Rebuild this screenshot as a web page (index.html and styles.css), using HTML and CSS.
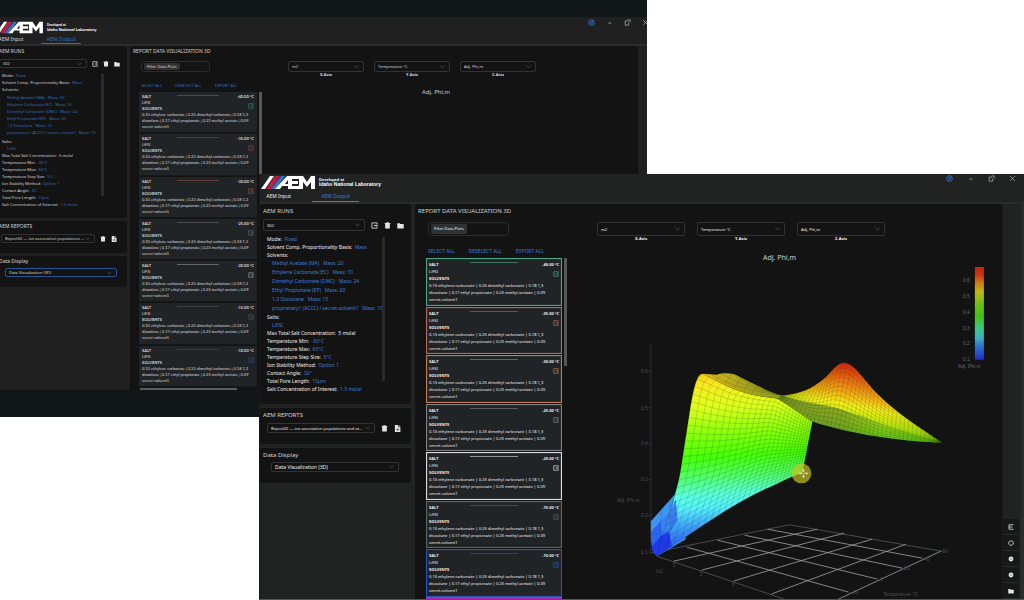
FILE: index.html
```html
<!DOCTYPE html>
<html lang="en">
<head>
<meta charset="utf-8">
<title>AEM Output</title>
<link rel="stylesheet" href="styles.css">
</head>
<body>
<main class="stage">
  <section class="window back" aria-label="AEM, data loading">
    <div class="app" data-app="back"></div>
  </section>
  <section class="window front" aria-label="AEM, 3D plot">
    <div class="app" data-app="front"></div>
  </section>
</main>

<template id="plot">
<svg class="plot" viewBox="568 264 434 336" role="img" aria-label="3D surface of Adj. Phi,m">
  <defs>
    <linearGradient id="face" gradientUnits="userSpaceOnUse" x1="690" y1="372" x2="700" y2="560">
      <stop offset="0" stop-color="#f4c41c"/><stop offset=".08" stop-color="#f8ec20"/><stop offset=".2" stop-color="#dcff1e"/>
      <stop offset=".33" stop-color="#8cff0c"/><stop offset=".46" stop-color="#46ff08"/><stop offset=".56" stop-color="#50ff64"/>
      <stop offset=".66" stop-color="#5cffe0"/><stop offset=".73" stop-color="#54f0ff"/><stop offset=".84" stop-color="#3c94f8"/><stop offset="1" stop-color="#2030f0"/>
    </linearGradient>
    <linearGradient id="ridge" gradientUnits="userSpaceOnUse" x1="850" y1="363" x2="836" y2="436">
      <stop offset="0" stop-color="#cc2010"/><stop offset=".2" stop-color="#e86010"/><stop offset=".4" stop-color="#f4a814"/>
      <stop offset=".56" stop-color="#f4ec1a"/><stop offset=".74" stop-color="#bcec10"/><stop offset=".9" stop-color="#70d014"/><stop offset="1" stop-color="#5cc012"/>
    </linearGradient>
    <linearGradient id="fold" x1="0" y1="0" x2="1" y2="0">
      <stop offset="0" stop-color="#e0bc1a"/><stop offset=".35" stop-color="#b8a81c"/><stop offset="1" stop-color="#849424"/>
    </linearGradient>
    <linearGradient id="under" gradientUnits="userSpaceOnUse" x1="780" y1="400" x2="943" y2="443">
      <stop offset="0" stop-color="#74862a"/><stop offset=".4" stop-color="#6c8c26" stop-opacity=".9"/><stop offset=".65" stop-color="#62b018" stop-opacity=".6"/><stop offset="1" stop-color="#58c810"/>
    </linearGradient>
    <linearGradient id="scale" x1="0" y1="0" x2="0" y2="1">
      <stop offset="0" stop-color="#c42410"/><stop offset=".08" stop-color="#c8340f"/><stop offset=".17" stop-color="#cc7c14"/><stop offset=".27" stop-color="#bcb818"/>
      <stop offset=".4" stop-color="#6cc010"/><stop offset=".54" stop-color="#3cc414"/><stop offset=".66" stop-color="#3cc888"/><stop offset=".77" stop-color="#3cacc4"/>
      <stop offset=".86" stop-color="#2c70d0"/><stop offset="1" stop-color="#2030c4"/>
    </linearGradient>
    <path id="edge-left" d="M703 374C697 374 694 388 690 412L681 470C679 482 677 488 675 496L663 534L657 557"/>
    <path id="edge-right" d="M813 422L808 448L803 473"/>
    <path id="edge-top" d="M703 374C716 380 730 390 757 396L778 399C790 405 800 414 813 422"/>
    <path id="edge-bottom" d="M657 557C690 536 735 502 770 488C782 482 792 477 803 473"/>
    <path id="ridge-top" d="M783 396C800 394 812 390 826 378C834 370 838 363 845 363C856 364 862 378 880 396C896 412 918 427 943 443"/>
    <path id="ridge-bottom" d="M778 399C790 406 800 414 813 422C830 428 850 432 876 438C900 441 920 442 943 443"/>
  </defs>

  <g class="floor">
    <path class="rim" d="M651 554L790 525.500L942 552M657 557L820 612"/>
    <path d="M768 530L923 559M745 536L903 569M718 541L878 580M687 548L849 593M674 562L818 530M702 571L845 534M734 582L873 540M772 595L907 545M818 610L942 552"/>
  </g>
  <path class="axis" d="M651 343V554M648 371.500h3M648 408h3M648 444h3M648 480h3M648 516.500h3M648 553h3M674 562v3M702 571v3M734 582v3M942 552l3 1M923 559l3 1M903 569l3 1M878 580l3 1M849 593l3 1"/>

  <path d="M651 522L676 494L686 540L657 557L653 552L651 537Z" fill="#3c94f4"/>
  <path d="M703 374C697 374 694 388 690 412L681 470C679 482 677 488 675 496L668 534L657 557C690 536 735 502 770 488C782 482 792 477 803 473L813 422L778 399L757 396C730 390 716 380 703 374Z" fill="url(#face)"/>
  <path d="M651 533L661 522L671 512L670 530L661 540L652 547Z" fill="#2c64f0"/>
  <path d="M661 522L671 512L676 500L678 522L670 532L662 536Z" fill="#3880f4"/>
  <path d="M652 547L661 537L669 532L672 547L657 557L653 552Z" fill="#2038f0"/>
  <path d="M651 533L661 522M661 512V538L657 557M670 500L671 530L665 552" class="mesh"/>
  <g id="face-mesh" class="mesh"></g>

  <path d="M703 374L717 375C724 373 732 373 738 376C754 384 770 393 783 396L790 401L778 399L757 396C730 390 716 380 703 374Z" fill="url(#fold)"/>
  <path d="M783 396C800 394 812 390 826 378C834 370 838 363 845 363C856 364 862 378 880 396C896 412 918 427 943 443C900 442 850 434 813 422L778 399Z" fill="url(#ridge)"/>
  <path d="M778 399L783 396C798 402 818 404 836 408C862 416 890 428 943 443C900 442 850 434 813 422C800 414 790 406 778 399Z" fill="url(#under)" opacity=".8"/>
  <g id="ridge-mesh" class="mesh"></g>
  <path class="mesh" d="M712 375C730 386 750 391 783 396M722 374C738 384 758 390 780 395M733 374C746 383 762 390 776 394M724 374L716 380M733 374L725 384M742 378L735 388M750 382L744 392M758 386L752 394M766 390L760 396"/>

  <g class="ticks">
    <text x="641" y="373">0.6</text><text x="641" y="410">0.5</text><text x="641" y="446">0.4</text>
    <text x="641" y="482">0.3</text><text x="641" y="518">0.2</text><text x="641" y="555">0.1</text>
    <text x="617" y="503">Adj. Phi,m</text><text x="656" y="574">m2</text>
    <text x="673" y="568">1</text><text x="700" y="577">2</text><text x="732" y="587">3</text>
    <text x="943" y="554">60</text><text x="925" y="562">40</text><text x="905" y="571">20</text><text x="881" y="582">0</text><text x="852" y="595">-20</text>
    <text x="884" y="597">Temperature °C</text>
  </g>

  <rect x="976" y="267" width="9" height="93" fill="url(#scale)"/>
  <g class="legend">
    <text x="964" y="282">0.6</text><text x="964" y="298">0.5</text><text x="964" y="314">0.4</text>
    <text x="964" y="330">0.3</text><text x="964" y="345">0.2</text><text x="964" y="361">0.1</text>
    <text x="959" y="368">Adj. Phi,m</text>
  </g>

  <circle cx="802" cy="474" r="10" fill="#c8c81e" opacity=".68"/>
  <g class="cursor"><path d="M804 470v3M804 475v3M800 474h3M805 474h3"/><path d="M803 471l1-1 1 1M803 477l1 1 1-1M801 473l-1 1 1 1M807 473l1 1-1 1"/></g>
</svg>
</template>
<script src="app.js"></script>
</body>
</html>
```

FILE: styles.css
```css
* { box-sizing: border-box; }

body {
  margin: 0;
  background: #fff;
  font-family: "Noto Sans", "Open Sans", sans-serif;
  color: #d4d4d4;
}

h1, h2, p, ul, dl, dd { margin: 0; padding: 0; font-weight: 400; }
ul { list-style: none; }

button, input, select {
  margin: 0;
  padding: 0;
  border: 0;
  background: none;
  color: inherit;
  font: inherit;
}

svg { display: block; fill: none; stroke: currentColor; }

.stage { position: relative; min-height: 600px; height: 100vh; overflow: hidden; }

/* the two overlapping windows */
.window { position: absolute; overflow: hidden; display: flex; flex-direction: column; }

.back {
  --text: 4px; --small: 3px; --head: 5px; --title: 6px;
  --head-line: 7px; --row: 7px; --sub-row: 7px; --card-row: 6px;
  --gap: 3px; --panel-top: 2px; --icon: 6px; --icon-gap: 5px;
  --field: 9px; --tool: 11px; --side: 131px; --rail: 20px;
  --ink: #d8d8d8; --blue: #3470bc;
  left: 0; top: 0; width: 63.2%; height: 417px;
  padding: 17px 0 27px;
  background: #111619;
}

.front {
  --text: 5px; --small: 4px; --head: 6px; --title: 7px;
  --head-line: 8px; --row: 8px; --sub-row: 9px; --card-row: 7px;
  --gap: 4px; --panel-top: 3px; --icon: 7px; --icon-gap: 6px;
  --field: 12px; --tool: 14px; --side: 151px; --rail: 22px;
  --ink: #f0f0f0; --blue: #3c7ed4;
  left: 25.3%; right: 0; top: 174px; bottom: 0;
  padding-left: 1px;
  border-bottom: 1px solid #555;
  background: #181a1a;
}

.app {
  flex: 1;
  min-height: 0;
  display: flex;
  flex-direction: column;
  background: #212323;
  color: var(--ink);
  font-size: var(--text);
}
.back .app { margin: 0 -11px 0 -4px; background: #202020; }

/* header */
.header { display: flex; justify-content: space-between; border-bottom: 2px solid #2a2c2c; }
.brand { display: flex; align-items: center; gap: 4px; height: 17px; padding-left: 1px; color: #fff; }
.logo { width: 54px; height: 15px; stroke: none; }
.lab { font: bold 5px/5px "Liberation Sans", sans-serif; }
.lab span { display: block; font-size: 4px; line-height: 4px; }
.back .brand { height: 19px; padding-top: 2px; padding-left: 0; }
.back .logo { width: 47px; height: 13px; }
.back .lab { font-size: 4px; }
.back .lab span { font-size: 3px; }

.tabs { display: flex; gap: 10px; margin-left: -5px; }
.tab { width: 47px; height: 11px; line-height: 9px; border-bottom: 1px solid transparent; text-align: center; }
.tab.on { color: var(--blue); border-color: var(--blue); }
.back .tab { width: 40px; height: 8px; line-height: 5px; font-size: 5px; }

.controls { display: flex; gap: 14px; padding: 1px 8px 0 0; color: #a4a4a4; }
.controls svg { width: 7px; height: 7px; }
.controls .help { color: #2f6fd0; }
.back .controls { gap: 11px; padding: 2px 9px 0 0; }

/* body */
.body { flex: 1; min-height: 0; display: flex; gap: var(--gap); }
.side { flex: 0 0 var(--side); min-width: 0; display: flex; flex-direction: column; gap: var(--gap); }
.panel { padding: var(--panel-top) 7px 10px 3px; border-radius: 3px; background: #131313; }
.panel h2 { font-size: var(--head); line-height: var(--head-line); color: #d4d4d4; white-space: nowrap; }
.front .panel { padding-bottom: 11px; }

.field { display: flex; align-items: center; gap: var(--icon-gap); margin-top: 4px; }
.field.reports { padding: 0 3px 0 4px; }
.field.display { padding: 0 5px 0 8px; margin-top: 3px; }
.back .field.reports { padding-left: 2px; }
.back .field.display { padding: 0 3px 0 6px; }

.pick {
  position: relative;
  flex: 1;
  min-width: 0;
  display: flex;
  height: var(--field);
  border: 1px solid #303234;
  border-radius: 2px;
}
.reports .pick, .display .pick { height: 10px; }
.back .pick { height: 9px; }
.pick select {
  appearance: none;
  flex: 1;
  min-width: 0;
  padding: 0 8px 0 3px;
  font-size: var(--small);
  line-height: 7px;
  text-overflow: ellipsis;
}
.pick svg { position: absolute; right: 4px; top: 50%; width: 5px; height: 4px; margin-top: -2px; color: #686868; }
.front .display select { font-size: var(--text); }
.back .pick select { font-size: 4px; }
.back .display .pick { border-color: #285494; }

.icon { width: var(--icon); height: var(--icon); color: #e4e4e4; }
.icon svg { width: 100%; height: 100%; }

.details { display: flex; justify-content: space-between; margin: 4px 19px 0 4px; line-height: var(--row); }
.back .details { margin: 4px 16px 0 3px; }
.details p { white-space: pre; }
.details b { font-weight: 400; color: var(--blue); }
.details li { padding-left: 5px; color: var(--blue); white-space: pre; line-height: var(--sub-row); }
.details .salts li { line-height: var(--row); }
.back .solvents { padding: 1px 0 2px; }
.bar { flex: 0 0 3px; margin: 2px 0 12px; background: #2a2b2b; }
.lines { flex: 1; min-width: 0; }

/* report */
.report { flex: 1; min-width: 0; display: flex; flex-direction: column; padding: var(--panel-top) 0 0 3px; border-radius: 3px 3px 0 0; background: #131313; }
.report h1 { font-size: var(--head); line-height: var(--head-line); color: #d4d4d4; }
.split { flex: 1; min-height: 0; display: flex; margin-top: 7px; }
.back .split { margin-top: 6px; }

.plots { flex: 0 0 149px; min-width: 0; display: flex; flex-direction: column; padding-left: 8px; }
.back .plots { flex-basis: 129px; padding-left: 6px; }
.filter { display: flex; align-items: center; width: 81px; height: var(--tool); margin-left: 2px; padding: 1px 2px; border: 1px solid #2a2c2e; border-radius: 3px; }
.filter label { flex: none; padding: 0 3px; border-radius: 2px; background: #2f3133; font-size: 4px; line-height: 10px; }
.filter input { flex: 1; min-width: 0; width: 0; height: 100%; }
.back .filter { width: 69px; }
.back .filter label { line-height: 7px; }
.actions { display: flex; gap: 14px; margin: 11px 0 3px 2px; line-height: 8px; color: var(--blue); }
.back .actions { gap: 13px; margin-top: 10px; line-height: 7px; }

.scroll { flex: 1; min-height: 0; display: flex; gap: 2px; }
.cards { flex: 1; min-width: 0; display: flex; flex-direction: column; gap: 1px; }
.thumb { flex: 0 0 3px; height: 108px; background: #555759; }
.card {
  flex: 1;
  min-height: 0;
  display: grid;
  grid-template-columns: 1fr auto 1fr;
  align-content: start;
  padding: 2px 2px 0;
  border: 1px solid var(--c);
  box-shadow: inset 0 0 1px var(--c);
  background: #212427;
  font-size: 4px;
  line-height: var(--card-row);
  white-space: nowrap;
}
.card b:nth-of-type(2) { text-align: right; }
.card .mark { width: 48px; height: 1px; margin-top: 1px; background: var(--c); opacity: .6; }
.card .salt { grid-column: 1 / 3; }
.card .export { justify-self: end; grid-row: 2 / 4; grid-column: 3; margin-top: 3px; color: var(--c); width: 6px; height: 6px; }
.card .export svg { width: 6px; height: 6px; }
.card .title { grid-column: 1 / 3; }
.card .mix { grid-column: 1 / 4; }
.card .mix span { display: block; }
.back .card { border: 0; border-bottom: 1px solid #151719; box-shadow: none; padding: 2px 3px 0; font-family: Lato, sans-serif; }
.back .card .mark { width: 42px; }
.more { height: 2px; margin-right: 5px; background: #c020c0; }
.back .more { width: 97px; margin: 1px 0 0 1px; background: #5a5c5e; }

.view { flex: 1; min-width: 0; display: flex; flex-direction: column; }
.axes { display: flex; gap: 12px; padding-left: 30px; }
.back .axes { gap: 10px; padding-left: 26px; }
.axes > div { width: 88px; }
.back .axes > div { width: 76px; }
.axes .pick, .back .axes .pick { height: var(--tool); }
.axes label { display: block; font-size: 4px; font-weight: 700; line-height: 6px; text-align: center; }
.back .axes label { line-height: 5px; }
.view h2 { margin: 12px 10px 2px 0; font-size: var(--title); line-height: 8px; text-align: center; color: #d0d0d0; }
.back .view h2 { margin: 11px 28px 0 0; }

.plot { width: 100%; flex: 1; min-height: 0; stroke: none; font-family: "Liberation Sans", sans-serif; font-size: 5px; }
.floor { stroke: #a0a2a6; stroke-width: 0.8; }
.floor .rim { stroke: #55585a; }
.axis { stroke: #3a3c3e; stroke-width: 0.7; }
.mesh { stroke: #143c08; stroke-opacity: .34; stroke-width: .5; fill: none; }
.ticks { fill: #4c4e50; }
.legend { fill: #66686a; }
.cursor { stroke: #e8e0e8; stroke-width: 1; }

/* right rail */
.tail { flex: 0 0 var(--rail); margin-left: calc(0px - var(--gap)); display: flex; flex-direction: column; justify-content: flex-end; border-right: 3px solid #303232; background: #212323; }
.front .tail { box-shadow: inset 1px 0 #1a1c1c; border-right-color: #2c2e2e; }
.tail .icon { display: flex; align-items: center; justify-content: center; width: 16px; height: 16px; margin: 0 0 0 1px; border-bottom: 1px solid #2a2c2c; background: #161818; }
.tail .icon svg { width: 6px; height: 6px; }
.back .tail { background: #202020; }
```

FILE: app.js
```js
const svg = (body, box = '0 0 12 12') => `<svg viewBox="${box}" aria-hidden="true">${body}</svg>`;

const icons = {
  chevron: svg('<path d="M1 1l4 5 4-5"/>', '0 0 10 8'),
  exit: svg('<path d="M10.500 4V1.500h-9v9h9V8M5 6h6M9 4.500L10.500 6 9 7.500" stroke-width="1.400"/>'),
  trash: svg('<path d="M2 3h8v8H2zM1 1.500h10V3H1zM4 .500h4v1H4z" fill="currentColor" stroke="none"/>'),
  folder: svg('<path d="M.500 2h4l1.500 1.500h5.500V11H.500z" fill="currentColor" stroke="none"/>'),
  file: svg('<path d="M1.500 0H7v4h4v8H1.500z" fill="currentColor" stroke="none"/><path d="M8 0l3 3H8z" fill="currentColor" stroke="none"/><path d="M4 8h5M6.500 6v4" stroke="#222"/>'),
  help: svg('<circle cx="6" cy="6" r="5" stroke-width="1.500"/><circle cx="6" cy="6" r="2" stroke-width="1.500"/><path d="M6 6l3-4" stroke-width="1.500"/>'),
  min: svg('<path d="M4 7h5" stroke-width="1.500"/>'),
  max: svg('<path d="M7 3.500H2v7h6V6M6 1.500h4.500V6" stroke-width="1.400"/>'),
  close: svg('<path d="M2 2l8 8M10 2l-8 8" stroke-width="1.400"/>'),
  list: svg('<path d="M11 1.500H2v9h9M2 6h7" stroke-width="1.600"/>'),
  cycle: svg('<path d="M4 2h4l2.500 2v4L8 10.500H4L1.500 8V4z" stroke-width="1.500"/>'),
  info: svg('<circle cx="6" cy="6" r="4.800" fill="currentColor" stroke="none"/><path d="M6 4v4" stroke="#222"/>')
};

const logo = `<svg class="logo" viewBox="0 0 54 15" role="img" aria-label="AEM">
  <path d="M9 1h4L4 14H0z" fill="#fff"/><path d="M14 1h5l-9 13H5z" fill="#c01c40"/><path d="M20 1h4l-9 13h-5z" fill="#2f74d0"/>
  <path d="M26 1h12v3h-7v2h6v3h-6v2h7v3H27v-3h-6l-2 3h-5zM27 5l-3 4h3z" fill="#fff"/>
  <path d="M38 14V1h4l4 6 4-6h4v13h-4V7l-4 5-4-5v7z" fill="#fff"/></svg>`;

const reports = [
  ['-40.00', '#4fa386'], ['-35.00', '#b8685c'], ['-30.00', '#c47c4c'], ['-25.00', '#808186'],
  ['-20.00', '#dcdce0'], ['-15.00', '#586866'], ['-10.00', '#2458b8']
];

const dim = ['#3d7a68', '#7a4a44', '#905040', '#66686a', '#909294', '#505254', '#234e90'];

const card = ([temp], i, colour) => `
  <article class="card" style="--c:${colour}">
    <b>SALT</b><span class="mark"></span><b>${temp} °C</b>
    <span class="salt">LiFSI</span>
    <button class="export" aria-label="Export ${temp}">${icons.exit}</button>
    <b class="title">SOLVENTS</b>
    <p class="mix"><span>0.10 ethylene carbonate | 0.23 dimethyl carbonate | 0.18 1,3</span>
    <span>dioxolane | 0.17 ethyl propionate | 0.23 methyl acetate | 0.09</span><span>secret-solvent1</span></p>
  </article>`;

const pick = (id, text, label) => `<span class="pick"><select id="${id}"${label ? ` aria-label="${label}"` : ''}><option>${text}</option></select>${icons.chevron}</span>`;

const button = (name, label) => `<button class="icon" aria-label="${label}">${icons[name]}</button>`;

const row = (name, value) => `<p>${name}  <b>${value}</b></p>`;

const axis = (id, name, text) => `<div>${pick(id, text)}<label for="${id}">${name}-Axis</label></div>`;

function render(host) {
  const key = host.dataset.app;
  const front = key === 'front';
  host.innerHTML = `
  <header class="header">
    <div>
      <div class="brand">${logo}<div class="lab"><span>Developed at</span>Idaho National Laboratory</div></div>
      <nav class="tabs"><button class="tab">AEM Input</button><button class="tab on">AEM Output</button></nav>
    </div>
    <div class="controls"><span class="help">${icons.help}</span>${icons.min}${icons.max}${icons.close}</div>
  </header>
  <div class="body">
    <aside class="side">
      <section class="panel">
        <h2>AEM RUNS</h2>
        <div class="field">${pick(key + '-run', '002', 'Run')}${button('exit', 'Export run')}${button('trash', 'Delete run')}${button('folder', 'Open folder')}</div>
        <div class="details">
          <div class="lines">
            ${row('Mode:', 'Fixed')}${row('Solvent Comp. Proportionality Basis:', 'Mass')}<p>Solvents:</p>
            <ul class="solvents"><li>Methyl Acetate (MA)   Mass: 20</li><li>Ethylene Carbonate (EC)   Mass: 10</li><li>Dimethyl Carbonate (DMC)   Mass: 24</li><li>Ethyl Propionate (EP)   Mass: 20</li><li>1,3 Dioxolane   Mass: 15</li><li>proprietary1 (ACCC) / secret-solvent1   Mass: 10</li></ul>
            <p>Salts:</p><ul class="salts"><li>LiFSI</li></ul>
            <p>Max Total Salt Concentration:  5 molal</p>
            ${row('Temperature Min:', '-30°C')}${row('Temperature Max:', '60°C')}${row('Temperature Step Size:', '5°C')}${row('Ion Stability Method:', 'Option 1')}${row('Contact Angle:', '32°')}${row('Total Pore Length:', '10µm')}${row('Salt Concentration of Interest:', '1.5 molal')}
          </div>
          <span class="bar"></span>
        </div>
      </section>
      <section class="panel">
        <h2>AEM REPORTS</h2>
        <div class="field reports">${pick(key + '-report', 'Report02 — ion association populations and ot...', 'Report')}${button('trash', 'Delete report')}${button('file', 'Open report')}</div>
      </section>
      <section class="panel">
        <h2>Data Display</h2>
        <div class="field display">${pick(key + '-display', 'Data Visualization (3D)', 'Data Display')}</div>
      </section>
    </aside>
    <section class="report">
      <h1>REPORT DATA VISUALIZATION 3D</h1>
      <div class="split">
        <div class="plots">
          <div class="filter"><label for="${key}-filter">Filter Data Plots</label><input id="${key}-filter" type="text"></div>
          <div class="actions"><button>SELECT ALL</button><button>DESELECT ALL</button><button>EXPORT ALL</button></div>
          <div class="scroll"><div class="cards">${reports.map((r, i) => card(r, i, front ? r[1] : dim[i])).join('')}</div><span class="thumb"></span></div>
          <div class="more"></div>
        </div>
        <div class="view">
          <div class="axes">${axis(key + '-x', 'X', 'm2')}${axis(key + '-y', 'Y', 'Temperature °C')}${axis(key + '-z', 'Z', 'Adj. Phi,m')}</div>
          <h2>Adj. Phi,m</h2>
        </div>
      </div>
    </section>
    <div class="tail">${front ? button('list', 'List') + button('cycle', 'Refresh') + button('info', 'Info') + button('info', 'About') + button('folder', 'Files') : ''}</div>
  </div>`;
  if (front) host.querySelector('.view').append(document.getElementById('plot').content.cloneNode(true));
}

document.querySelectorAll('[data-app]').forEach(render);

/* surface mesh: lines blended between the boundary curves */
const curve = id => {
  const path = document.getElementById(id);
  const length = path.getTotalLength();
  return t => path.getPointAtLength(t * length);
};

const coons = (top, bottom, left, right) => (u, v) => {
  const [t, b, l, r] = [top(u), bottom(u), left(v), right(v)];
  const [tl, tr, bl, br] = [top(0), top(1), bottom(0), bottom(1)];
  const mix = k => (1 - v) * t[k] + v * b[k] + (1 - u) * l[k] + u * r[k]
    - ((1 - u) * (1 - v) * tl[k] + u * (1 - v) * tr[k] + (1 - u) * v * bl[k] + u * v * br[k]);
  return [mix('x'), mix('y')];
};

const line = points => `<path d="M${points.map(p => p.map(n => n.toFixed(1)).join(' ')).join('L')}"/>`;
const steps = n => Array.from({ length: n + 1 }, (_, i) => i / n);

function drawMesh(id, surface, columns, rows, ease) {
  const across = steps(24);
  const vertical = steps(columns).map(u => line(across.map(v => surface(ease(u), v))));
  const horizontal = steps(rows).map(v => line(across.map(u => surface(u, v))));
  document.getElementById(id).innerHTML = vertical.concat(horizontal).join('');
}

drawMesh('face-mesh', coons(curve('edge-top'), curve('edge-bottom'), curve('edge-left'), curve('edge-right')), 26, 24, u => 1.6 * u - 0.6 * u * u);

const high = curve('ridge-top');
const low = curve('ridge-bottom');
drawMesh('ridge-mesh', (u, v) => {
  const a = high(u), b = low(u);
  return [a.x + (b.x - a.x) * v, a.y + (b.y - a.y) * v];
}, 40, 14, u => u);
```
